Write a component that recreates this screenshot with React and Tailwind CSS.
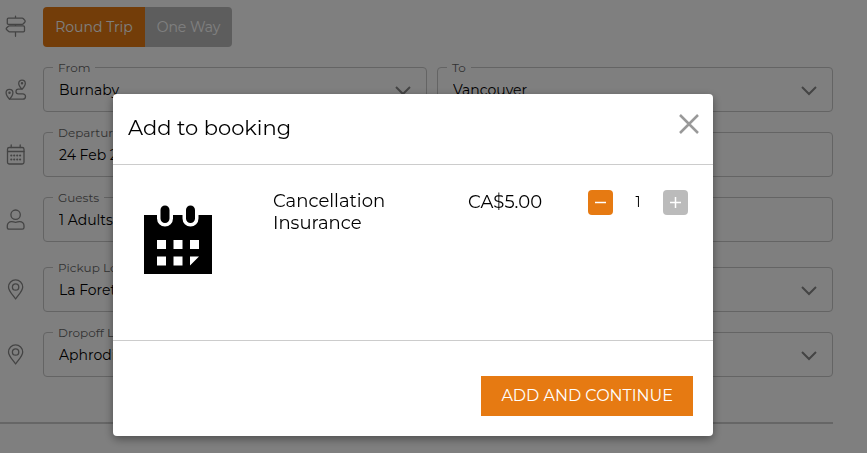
import { useState } from 'react'

function SignIcon() {
  return (
    <svg width="22" height="22" viewBox="0 0 22 22" fill="none" stroke="currentColor" strokeWidth="1.3" strokeLinejoin="round" strokeLinecap="round">
      <path d="M10.500 1.200v2M10.500 9.300v1.500M10.500 16.800v4.500M3.400 3.200h13.800q.7 0 1.200.5l1.500 1.700q.6.800 0 1.600l-1.500 1.700q-.5.600-1.200.6H3.400q-1.100 0-1.100-1.100V4.300q0-1.100 1.100-1.100ZM18.400 10.800H4.600q-.7 0-1.200.5L1.500 13q-.6.800 0 1.600l1.900 1.700q.5.500 1.200.5h13.800q1.100 0 1.100-1.100v-3.800q0-1.100-1.100-1.100Z" />
    </svg>
  )
}

function RouteIcon() {
  return (
    <svg width="22" height="22" viewBox="0 0 22 22" fill="none" stroke="currentColor" strokeWidth="1.3" strokeLinejoin="round" strokeLinecap="round">
      <path d="M17 10.200c-1.800-2-3.300-3.700-3.300-5.800a3.300 3.300 0 0 1 6.600 0c0 2.100-1.500 3.800-3.300 5.800ZM4.500 20.200C2.500 18 1.100 16 1.100 13.800a3.400 3.400 0 0 1 6.800 0C7.900 16 6.500 18 4.500 20.200ZM4.500 20.200h13.300a2.700 2.700 0 0 0 0-5.400h-4.500a2.300 2.300 0 0 1 0-4.600H17" />
      <circle cx="17" cy="4.300" r="0.600" />
      <circle cx="4.500" cy="13.800" r="0.600" />
    </svg>
  )
}

function DateIcon() {
  return (
    <svg width="22" height="22" viewBox="0 0 22 22" fill="none" stroke="currentColor" strokeWidth="1.300" strokeLinecap="round">
      <rect x="2.500" y="3.500" width="16.500" height="16.500" rx="1.800" />
      <path d="M2.500 7.500h16.500M6.200 1v2.500M15.200 1v2.500" />
      <path d="M6.300 11.500h.01M9.200 11.500h.01M12.200 11.500h.01M15.100 11.500h.01M6.300 15.500h.01M9.200 15.500h.01M12.200 15.500h.01M15.100 15.500h.01" strokeWidth="2.200" />
    </svg>
  )
}

function PersonIcon() {
  return (
    <svg width="22" height="22" viewBox="0 0 22 22" fill="none" stroke="currentColor" strokeWidth="1.300">
      <circle cx="10.600" cy="5.700" r="4.700" />
      <path d="M6.600 12.600c1.500 0 2.300.7 4 .7s2.500-.7 4-.7c2.600 0 4.400 1.900 4.400 4.200v1.600q0 1.700-1.700 1.700H4q-1.700 0-1.700-1.700v-1.600c0-2.300 1.700-4.200 4.300-4.200Z" />
    </svg>
  )
}

function PinIcon() {
  return (
    <svg width="22" height="22" viewBox="0 0 22 22" fill="none" stroke="currentColor" strokeWidth="1.300" strokeLinejoin="round">
      <path d="M10.600 20C7.500 15.500 3.500 12 3.500 8a7.100 7.100 0 0 1 14.200 0C17.700 12 13.700 15.500 10.600 20Z" />
      <circle cx="10.600" cy="8" r="3.200" />
    </svg>
  )
}

function CalendarImage() {
  return (
    <svg className="mt-[14px] shrink-0" width="70" height="71" viewBox="0 0 70 71">
      <path d="M1 11h68v59H1z" />
      <g stroke="#fff" strokeLinecap="round">
        <path d="M22 7v7.500M47.500 7v7.500" strokeWidth="16" />
        <path d="M22 6v8.500M47.500 6v8.500" stroke="#000" strokeWidth="9" />
      </g>
      <path d="M14 36h9v9h-9zM30.500 36h9v9h-9zM47 36h9v9h-9zM14 52.500h9v9h-9zM30.500 52.500h9v9h-9zM47 52.500h9l-9 9z" fill="#fff" />
    </svg>
  )
}

function Chevron() {
  return (
    <svg className="pointer-events-none absolute right-[15px] top-[10px]" width="16" height="10" viewBox="0 0 16 10" fill="none" stroke="#888" strokeWidth="2">
      <path d="M1 1l7 7 7-7" />
    </svg>
  )
}

function Field({ id, label, value, select }) {
  return (
    <fieldset className="h-[53px] min-w-0 rounded border border-[#c8c8c8] pl-[9px]">
      <legend className="px-[5px] text-[12px] leading-[17px] text-[#666]">
        <label htmlFor={id}>{label}</label>
      </legend>
      <div className="relative">
        {select ? (
          <>
            <select id={id} className="block h-7 w-full appearance-none bg-transparent pl-[6px] text-[14px] text-black outline-none">
              <option>{value}</option>
            </select>
            <Chevron />
          </>
        ) : (
          <input id={id} readOnly defaultValue={value} className="block h-7 w-full bg-transparent pl-[6px] text-[14px] text-black outline-none" />
        )}
      </div>
    </fieldset>
  )
}

function Row({ icon, children }) {
  return (
    <div className="flex">
      <div className="w-[43px] shrink-0 pt-5 pl-[5px] text-[#888]">{icon}</div>
      <div className="min-w-0 flex-1">{children}</div>
    </div>
  )
}

export default function App() {
  const [trip, setTrip] = useState('round')
  const [open, setOpen] = useState(true)
  const [count, setCount] = useState(1)

  return (
    <div className="min-h-screen bg-white font-['Montserrat','Inter',sans-serif] text-black">
      {/* Booking form */}
      <main className="pt-[7px] pr-[34px]">
        <div className="flex">
          <div className="w-[43px] shrink-0 pt-2 pl-[5px] text-[#888]"><SignIcon /></div>
          <div className="flex h-10 overflow-hidden rounded text-[14px] text-white">
            <button
              onClick={() => setTrip('round')}
              className={`w-[102px] ${trip === 'round' ? 'bg-[#e67a12]' : 'bg-[#bbb]'}`}
            >
              Round Trip
            </button>
            <button
              onClick={() => setTrip('oneway')}
              className={`w-[87px] ${trip === 'oneway' ? 'bg-[#e67a12]' : 'bg-[#bbb]'}`}
            >
              One Way
            </button>
          </div>
        </div>

        <div className="mt-3 flex flex-col gap-3">
          <Row icon={<RouteIcon />}>
            <div className="grid grid-cols-[32fr_33fr] gap-[10px]">
              <Field id="from" label="From" value="Burnaby" select />
              <Field id="to" label="To" value="Vancouver" select />
            </div>
          </Row>
          <Row icon={<DateIcon />}>
            <Field id="date" label="Departure" value="24 Feb 2023" />
          </Row>
          <Row icon={<PersonIcon />}>
            <Field id="guests" label="Guests" value="1 Adults" />
          </Row>
        </div>
        <div className="mt-[17px] flex flex-col gap-3">
          <Row icon={<PinIcon />}>
            <Field id="pickup" label="Pickup Location" value="La Foret" select />
          </Row>
          <Row icon={<PinIcon />}>
            <Field id="dropoff" label="Dropoff Location" value="Aphrodite" select />
          </Row>
        </div>
        <hr className="mt-[45px] border-t-2 border-[#ccc]" />
      </main>

      {/* Modal */}
      {open && (
        <div className="fixed inset-0 flex items-start justify-center bg-black/50 pt-[94px] pr-[41px]">
          <div role="dialog" aria-labelledby="dialog-title" className="w-full max-w-[600px] rounded bg-white shadow-[0_3px_10px_rgba(0,0,0,0.4)]">
            <header className="flex h-[71px] items-center justify-between border-b border-[#ccc] pr-[14px] pb-[2px] pl-[15px]">
              <h2 id="dialog-title" className="text-[21px]">Add to booking</h2>
              <button aria-label="Close" onClick={() => setOpen(false)} className="mb-2">
                <svg width="20" height="20" viewBox="0 0 20 20" fill="none" stroke="#999" strokeWidth="2.500">
                  <path d="M1 1l18 18M19 1L1 19" />
                </svg>
              </button>
            </header>

            <div className="flex h-[175px] items-start pt-[25px] pr-[25px] pl-[30px]">
              <div className="w-[130px] shrink-0"><CalendarImage /></div>
              <p className="w-[195px] pr-[60px] text-[18px] leading-[22px]">Cancellation Insurance</p>
              <p className="text-[18px] leading-6">CA$5.00</p>
              <div className="ml-auto flex items-center">
                <button
                  aria-label="Remove one"
                  onClick={() => setCount(Math.max(0, count - 1))}
                  className="flex size-[25px] items-center justify-center rounded bg-[#e67a12]"
                >
                  <svg width="13" height="13" viewBox="0 0 13 13" stroke="#fff" strokeWidth="1.500"><path d="M1 6.500h11" /></svg>
                </button>
                <span className="w-[50px] text-center text-[14px]">{count}</span>
                <button
                  aria-label="Add one"
                  onClick={() => setCount(count + 1)}
                  className="flex size-[25px] items-center justify-center rounded bg-[#bbb]"
                >
                  <svg width="13" height="13" viewBox="0 0 13 13" stroke="#fff" strokeWidth="1.500"><path d="M1 6.500h11M6.500 1v11" /></svg>
                </button>
              </div>
            </div>

            <footer className="flex justify-end border-t border-[#ccc] px-5 pt-[35px] pb-5">
              <button className="h-10 bg-[#e67a12] px-5 text-[16px] text-white">ADD AND CONTINUE</button>
            </footer>
          </div>
        </div>
      )}
    </div>
  )
}
